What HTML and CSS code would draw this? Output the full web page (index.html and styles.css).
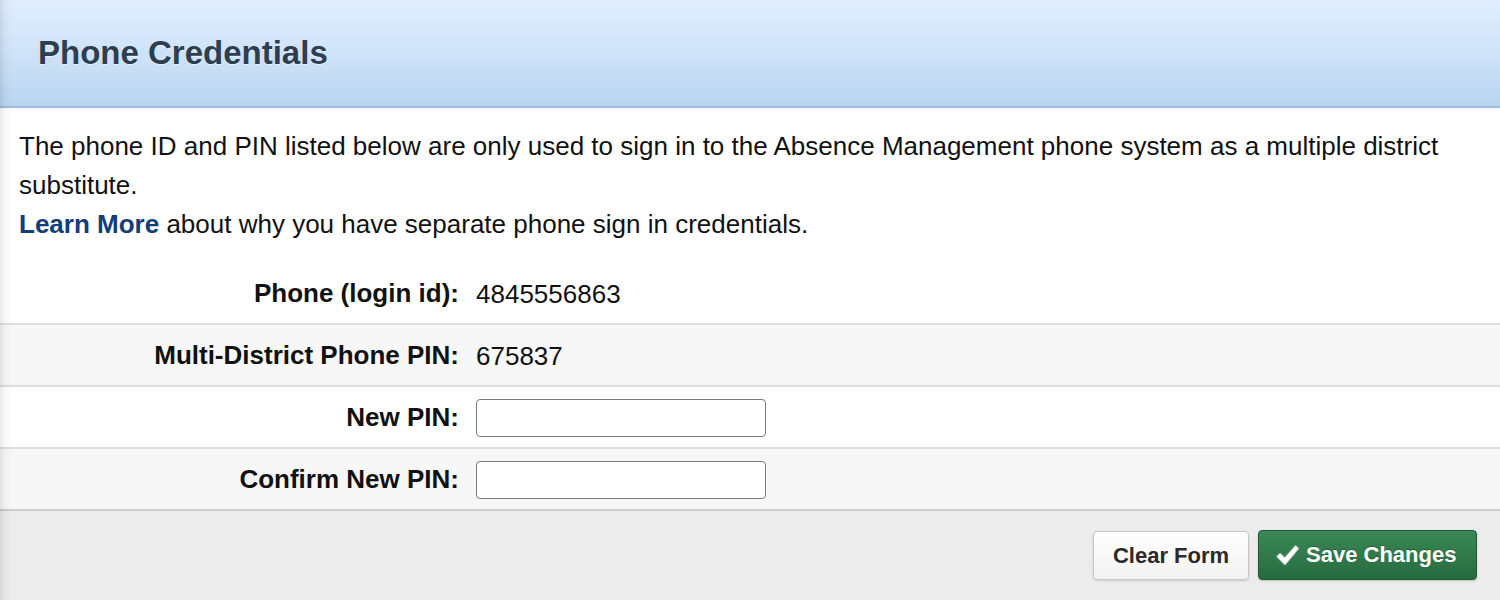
FILE: index.html
```html
<!DOCTYPE html>
<html lang="en">
<head>
<meta charset="utf-8">
<title>Phone Credentials</title>
<link rel="stylesheet" href="styles.css">
</head>
<body>
<div class="panel">
  <div class="panel-header">
    <h1 class="panel-title">Phone Credentials</h1>
  </div>
  <div class="intro">
    <p class="intro-text">The phone ID and PIN listed below are only used to sign in to the Absence Management phone system as a multiple district substitute.</p>
    <p class="intro-text"><a class="learn-link" href="#">Learn More</a> about why you have separate phone sign in credentials.</p>
  </div>
  <div class="form-rows">
    <div class="form-row">
      <div class="form-label">Phone (login id):</div>
      <div class="form-value">4845556863</div>
    </div>
    <div class="form-row alt">
      <div class="form-label">Multi-District Phone PIN:</div>
      <div class="form-value">675837</div>
    </div>
    <div class="form-row">
      <div class="form-label">New PIN:</div>
      <div class="form-value"><input class="text-input" type="password"></div>
    </div>
    <div class="form-row alt last">
      <div class="form-label">Confirm New PIN:</div>
      <div class="form-value"><input class="text-input" type="password"></div>
    </div>
  </div>
  <div class="panel-footer">
    <button class="btn btn-default" type="button">Clear Form</button>
    <button class="btn btn-primary" type="button">
      <svg class="btn-icon" viewBox="0 0 24 24" width="24" height="24" aria-hidden="true"><path d="M1.5 13 L5 9.8 L9.3 14.2 L19.8 2.5 L22.8 5.3 L9.6 21 Z" fill="#fff"/></svg>
      Save Changes
    </button>
  </div>
</div>
</body>
</html>
```

FILE: styles.css
```css
* { box-sizing: border-box; }
html, body {
  margin: 0;
  padding: 0;
  background: #fff;
}
body {
  font-family: "Liberation Sans", Arial, Helvetica, sans-serif;
  color: #111;
  width: 1500px;
  height: 600px;
  overflow: hidden;
}
.panel {
  position: relative;
  display: flex;
  flex-direction: column;
  height: 600px;
}
.panel::before {
  content: "";
  position: absolute;
  left: 0;
  top: 0;
  bottom: 0;
  width: 12px;
  background: linear-gradient(to right, rgba(0,0,0,0.09), rgba(0,0,0,0.03) 40%, rgba(0,0,0,0));
  pointer-events: none;
  z-index: 2;
}
.panel-header {
  height: 108px;
  background: linear-gradient(to bottom, #e0eefd 0%, #cfe3f8 50%, #b9d4f0 100%);
  border-bottom: 2px solid #9dbcde;
  display: flex;
  align-items: center;
  padding-left: 38px;
}
.panel-title {
  margin: 0;
  font-size: 33px;
  font-weight: bold;
  color: #2c3e50;
  text-shadow: 0 1px 0 rgba(255,255,255,0.6);
  padding-bottom: 0;
}
.intro {
  padding: 19px 19px 19px 19px;
}
.intro-text {
  margin: 0;
  font-size: 26px;
  line-height: 39px;
  color: #111;
}
.learn-link {
  color: #123d7a;
  font-weight: bold;
  text-decoration: none;
}
.form-rows {
  display: flex;
  flex-direction: column;
}
.form-row {
  display: grid;
  grid-template-columns: 459px 1fr;
  column-gap: 17px;
  align-items: center;
  height: 62px;
  border-bottom: 2px solid #dedede;
  background: #fff;
}
.form-row.alt { background: #f7f7f7; }
.form-row.last { border-bottom-color: #cdcdcd; }
.form-label {
  text-align: right;
  font-size: 26px;
  font-weight: bold;
  color: #111;
}
.form-value {
  font-size: 26px;
  color: #111;
  display: flex;
  align-items: center;
  padding-top: 2px;
}
.text-input {
  width: 290px;
  height: 38px;
  border: 1px solid #7a7a7a;
  border-radius: 4px;
  background: #fff;
  margin: 0;
  padding: 0 8px;
  font-size: 20px;
}
.panel-footer {
  flex: 1;
  background: #ececec;
  display: flex;
  justify-content: flex-end;
  align-items: flex-start;
  gap: 9px;
  padding: 19px 23px 0 0;
}
.btn {
  height: 50px;
  font-family: "Liberation Sans", Arial, Helvetica, sans-serif;
  font-size: 22px;
  font-weight: bold;
  border-radius: 4px;
  display: flex;
  align-items: center;
  cursor: pointer;
}
.btn-default {
  margin-top: 1px;
  height: 49px;
  width: 156px;
  justify-content: center;
  color: #2a2a2a;
  background: linear-gradient(to bottom, #ffffff, #f2f2f2);
  border: 1px solid #c6c6c6;
  box-shadow: 0 1px 2px rgba(0,0,0,0.15);
}
.btn-primary {
  width: 219px;
  padding-left: 16px;
  gap: 6px;
  color: #fff;
  background: linear-gradient(to bottom, #3b8756, #266b3f);
  border: 1px solid #1f5c36;
  box-shadow: 0 1px 2px rgba(0,0,0,0.2);
  text-shadow: 0 -1px 0 rgba(0,0,0,0.25);
}
.btn-icon {
  width: 25px;
  height: 25px;
  filter: drop-shadow(0 0 1px rgba(255,255,255,0.5));
}
```
